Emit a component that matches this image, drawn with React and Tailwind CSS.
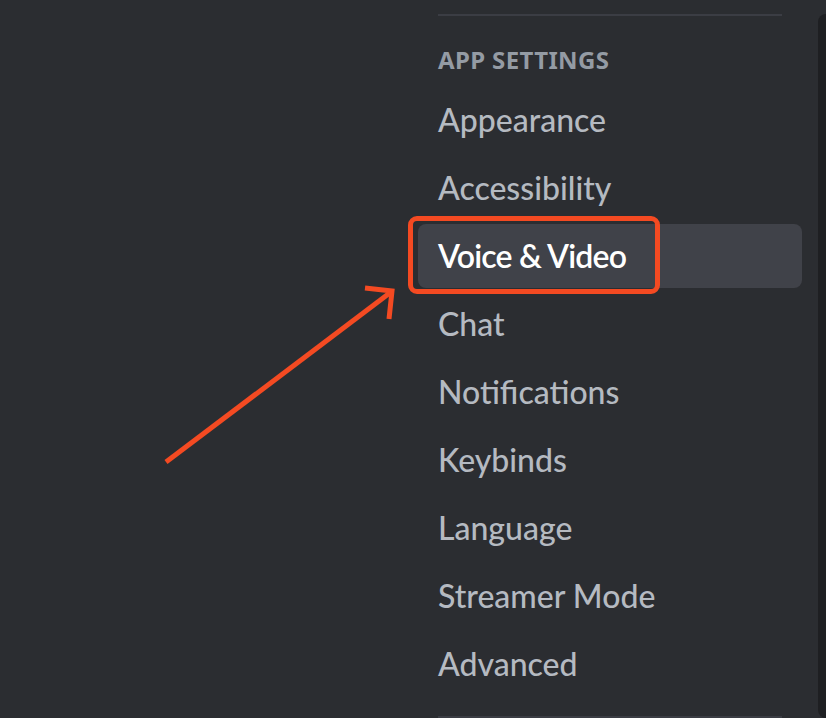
import React from 'react';

const items = [
  'Appearance',
  'Accessibility',
  'Voice & Video',
  'Chat',
  'Notifications',
  'Keybinds',
  'Language',
  'Streamer Mode',
  'Advanced',
];

const App = () => {
  return (
    <div
      className="relative flex w-full h-[718px] overflow-hidden bg-[#2b2d31]"
      style={{ fontFamily: '"Noto Sans", "Open Sans", sans-serif' }}
    >
      {/* Left empty area */}
      <div className="w-[418px] shrink-0" />

      {/* Settings sidebar */}
      <nav className="w-[384px] shrink-0 flex flex-col">
        <div className="mx-[20px] mt-[14px] mb-[16px] h-[2px] bg-[#3b3d44]" />
        <h2 className="px-[20px] py-[12px] text-[24px] leading-[32px] font-bold uppercase tracking-[0.015em] text-[#949ba4]">
          App Settings
        </h2>
        {items.map((label) => {
          const selected = label === 'Voice & Video';
          return (
            <div
              key={label}
              className={
                selected
                  ? 'relative mb-[4px] flex h-[64px] items-center rounded-[8px] bg-[#404249] px-[20px] font-["Lato",sans-serif] text-[32px] leading-[40px] font-semibold tracking-[-0.025em] text-white'
                  : 'relative mb-[4px] flex h-[64px] items-center rounded-[8px] px-[20px] font-["Lato",sans-serif] text-[32px] leading-[40px] font-medium text-[#b5bac1]'
              }
            >
              {label}
              {selected && (
                <div className="pointer-events-none absolute left-[-10px] top-[-8px] h-[78px] w-[252px] rounded-[9px] border-[5px] border-[#f44a22]" />
              )}
            </div>
          );
        })}
        <div className="mx-[20px] mt-[16px] h-[2px] bg-[#3b3d44]" />
      </nav>

      <div className="w-[16px] shrink-0" />
      {/* Scrollbar track */}
      <div className="mt-[14px] w-[16px] shrink-0 rounded-full bg-[#1e1f22]" />

      {/* Annotation arrow */}
      <svg
        className="pointer-events-none absolute inset-0"
        width="826"
        height="718"
        viewBox="0 0 826 718"
      >
        <g stroke="#f44a22" strokeWidth="5" fill="none" strokeLinecap="butt" strokeLinejoin="miter">
          <line x1="166" y1="462" x2="391" y2="292" />
          <polyline points="365,288 392,291 389,319" />
        </g>
      </svg>
    </div>
  );
};

export default App;
